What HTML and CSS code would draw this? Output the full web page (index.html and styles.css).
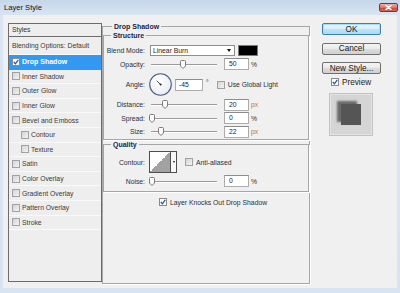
FILE: index.html
```html
<!DOCTYPE html>
<html>
<head>
<meta charset="utf-8">
<title>Layer Style</title>
<link rel="stylesheet" href="styles.css">
</head>
<body>
<div class="window">
  <div class="titlebar">
    <span class="title">Layer Style</span>
    <span class="close"><svg viewBox="0 0 7 5" width="7" height="5"><path d="M1 0.5 L6 4.5 M6 0.5 L1 4.5" stroke="#fff" stroke-width="1.5" stroke-linecap="round"/></svg></span>
  </div>
  <div class="client">
    <div class="styles">
      <div class="styles-head">Styles</div>
      <div class="row blend">Blending Options: Default</div>
      <div class="row sel"><span class="cb on"><svg viewBox="0 0 6 6"><path d="M0.8 3 L2.4 4.8 L5.3 0.8" fill="none" stroke="#2a4b9b" stroke-width="1.2"/></svg></span>Drop Shadow</div>
      <div class="row"><span class="cb"></span>Inner Shadow</div>
      <div class="row"><span class="cb"></span>Outer Glow</div>
      <div class="row"><span class="cb"></span>Inner Glow</div>
      <div class="row"><span class="cb"></span>Bevel and Emboss</div>
      <div class="row sub"><span class="cb"></span>Contour</div>
      <div class="row sub"><span class="cb"></span>Texture</div>
      <div class="row"><span class="cb"></span>Satin</div>
      <div class="row"><span class="cb"></span>Color Overlay</div>
      <div class="row"><span class="cb"></span>Gradient Overlay</div>
      <div class="row"><span class="cb"></span>Pattern Overlay</div>
      <div class="row"><span class="cb"></span>Stroke</div>
    </div>

    <fieldset class="group main">
      <legend class="main-legend">Drop Shadow</legend>
      <fieldset class="group sub-group structure">
        <legend class="sub-legend">Structure</legend>
        <div class="form">
          <span class="lbl">Blend Mode:</span>
          <div class="ctl">
            <div class="select"><span>Linear Burn</span><span class="arrow"></span></div>
            <div class="color"></div>
          </div>

          <span class="lbl">Opacity:</span>
          <div class="ctl">
            <div class="slider"><div class="track"></div><svg class="knob" style="left:30px" viewBox="0 0 6 9"><path d="M0.5 1.5 Q0.5 0.5 1.5 0.5 H4.5 Q5.5 0.5 5.5 1.5 V6 L3 8.5 L0.5 6 Z" fill="#fbfbfb" stroke="#7b7b7b"/></svg></div>
            <div class="num">50</div><span class="unit">%</span>
          </div>

          <span class="lbl">Angle:</span>
          <div class="ctl">
            <svg class="dial" viewBox="0 0 23 23"><defs><radialGradient id="dg" cx="0.4" cy="0.35" r="0.7"><stop offset="0" stop-color="#ffffff"/><stop offset="1" stop-color="#e9ecf2"/></radialGradient></defs><circle cx="11.5" cy="11.5" r="10.8" fill="url(#dg)" stroke="#4c5b7e" stroke-width="1.1"/><path d="M11.5 11.5 L7.8 7.8" stroke="#333" stroke-width="0.9"/><circle cx="11.6" cy="11.6" r="1" fill="#222"/></svg>
            <div class="num angle">-45</div><span class="deg">°</span>
            <span class="cb gap8"></span><span class="cblabel">Use Global Light</span>
          </div>

          <span class="lbl">Distance:</span>
          <div class="ctl">
            <div class="slider"><div class="track"></div><svg class="knob" style="left:12px" viewBox="0 0 6 9"><path d="M0.5 1.5 Q0.5 0.5 1.5 0.5 H4.5 Q5.5 0.5 5.5 1.5 V6 L3 8.5 L0.5 6 Z" fill="#fbfbfb" stroke="#7b7b7b"/></svg></div>
            <div class="num">20</div><span class="unit px">px</span>
          </div>

          <span class="lbl">Spread:</span>
          <div class="ctl">
            <div class="slider"><div class="track"></div><svg class="knob" style="left:-1px" viewBox="0 0 6 9"><path d="M0.5 1.5 Q0.5 0.5 1.5 0.5 H4.5 Q5.5 0.5 5.5 1.5 V6 L3 8.5 L0.5 6 Z" fill="#fbfbfb" stroke="#7b7b7b"/></svg></div>
            <div class="num">0</div><span class="unit">%</span>
          </div>

          <span class="lbl">Size:</span>
          <div class="ctl">
            <div class="slider"><div class="track"></div><svg class="knob" style="left:8px" viewBox="0 0 6 9"><path d="M0.5 1.5 Q0.5 0.5 1.5 0.5 H4.5 Q5.5 0.5 5.5 1.5 V6 L3 8.5 L0.5 6 Z" fill="#fbfbfb" stroke="#7b7b7b"/></svg></div>
            <div class="num">22</div><span class="unit px">px</span>
          </div>
        </div>
      </fieldset>

      <fieldset class="group sub-group quality">
        <legend class="sub-legend">Quality</legend>
        <div class="form">
          <span class="lbl">Contour:</span>
          <div class="ctl">
            <div class="contour"><div class="curve"></div><div class="drop"><span class="mini-arrow"></span></div></div>
            <span class="cb gap8"></span><span class="cblabel">Anti-aliased</span>
          </div>

          <span class="lbl">Noise:</span>
          <div class="ctl">
            <div class="slider"><div class="track"></div><svg class="knob" style="left:-1px" viewBox="0 0 6 9"><path d="M0.5 1.5 Q0.5 0.5 1.5 0.5 H4.5 Q5.5 0.5 5.5 1.5 V6 L3 8.5 L0.5 6 Z" fill="#fbfbfb" stroke="#7b7b7b"/></svg></div>
            <div class="num">0</div><span class="unit">%</span>
          </div>
        </div>
      </fieldset>

      <div class="knock"><span class="cb on"><svg viewBox="0 0 6 6"><path d="M0.8 3 L2.4 4.8 L5.3 0.8" fill="none" stroke="#2a4b9b" stroke-width="1.2"/></svg></span><span class="cblabel">Layer Knocks Out Drop Shadow</span></div>
    </fieldset>

    <div class="side">
      <div class="btn default">OK</div>
      <div class="btn">Cancel</div>
      <div class="btn">New Style...</div>
      <div class="preview"><span class="cb on"><svg viewBox="0 0 6 6"><path d="M0.8 3 L2.4 4.8 L5.3 0.8" fill="none" stroke="#2a4b9b" stroke-width="1.2"/></svg></span><span class="pv-label">Preview</span></div>
      <div class="swatch"><div class="sq"></div></div>
    </div>
  </div>
</div>
</body>
</html>
```

FILE: styles.css
```css
* { box-sizing: border-box; }
html, body { margin: 0; padding: 0; }
body {
  width: 400px;
  height: 293px;
  overflow: hidden;
  font-family: "Liberation Sans", Arial, sans-serif;
  font-size: 6.8px;
  color: #2e2e2e;
  background: #d6e3f1;
}
.window {
  width: 400px;
  height: 293px;
  display: flex;
  flex-direction: column;
  background: linear-gradient(#c6d7ea, #d9e5f2 16px, #d8e4f1);
}
.titlebar {
  height: 15px;
  flex: none;
  display: flex;
  align-items: center;
  justify-content: space-between;
  padding: 0 2px 0 4px;
}
.title { font-size: 7.6px; color: #111; }
.close {
  width: 19px;
  height: 9px;
  border: 1px solid #7d3329;
  border-radius: 2px;
  background: linear-gradient(#ebb2a6, #d87766 50%, #c3483a 51%, #d2695a);
  display: flex;
  align-items: center;
  justify-content: center;
}
.close svg { display: block; }

.client {
  flex: 1;
  margin: 0 3px 5px;
  background: #f0f0f0;
  display: flex;
  align-items: flex-start;
  padding: 7px 5px 0;
}

/* Styles list */
.styles {
  flex: none;
  width: 94px;
  height: 259px;
  margin-top: 1px;
  border: 1px solid #6c6c6c;
  background: #eeeeee;
}
.styles-head {
  height: 13px;
  border-bottom: 1px solid #6c6c6c;
  padding-left: 3px;
  line-height: 12px;
  color: #333;
}
.row {
  height: 14.6px;
  display: flex;
  align-items: center;
  padding-left: 3px;
  border-bottom: 1px solid #f9f9f9;
  color: #3a3a3a;
  white-space: nowrap;
}
.row.blend { height: 18px; }
.row.sub { padding-left: 12px; }
.row .cb { margin-right: 2px; }
.row.sel {
  background: #3398f2;
  color: #fff;
  font-weight: bold;
  font-size: 7px;
  border-bottom-color: #3398f2;
}

.cb {
  flex: none;
  width: 8px;
  height: 8px;
  border: 1px solid #a2a2a2;
  background: linear-gradient(135deg, #d4d4d4, #f3f3f3);
  display: inline-flex;
  align-items: center;
  justify-content: center;
}
.cb.on { background: #fdfdfd; border-color: #8a8a8a; }
.cb svg { width: 6px; height: 6px; display: block; }

/* Group boxes */
fieldset.group {
  margin: 0;
  padding: 0;
  min-width: 0;
  border: 1px solid #a6a6a6;
  box-shadow: 1px 1px 0 #ffffff;
}
fieldset.group legend {
  padding: 0 2px;
  font-weight: bold;
  font-size: 7px;
  line-height: 9px;
  color: #1c2546;
}
.main {
  flex: none;
  width: 208px;
  height: 262px;
  margin-left: 11px;
}
.main-legend { margin-left: 9px; }
.sub-group { margin: 2px 6px 0 7px; }
.sub-legend { margin-left: 7px; }
.quality { margin-top: 7px; }

.form {
  display: grid;
  grid-template-columns: 41px auto;
  column-gap: 5px;
}
.structure .form {
  padding: 3px 0 1px;
  grid-template-rows: 14px 14px 27px 13px 14px 13px;
}
.quality .form {
  padding: 1px 0 3px;
  grid-template-rows: 24px 14px;
}
.lbl {
  text-align: right;
  align-self: center;
  white-space: nowrap;
  color: #2b2f3a;
}
.ctl {
  display: flex;
  align-items: center;
  white-space: nowrap;
}

.select {
  width: 85px;
  height: 11px;
  border: 1px solid #8e8e8e;
  background: #fff;
  display: flex;
  align-items: center;
  justify-content: space-between;
  padding-left: 2px;
  color: #222;
}
.select .arrow {
  width: 0;
  height: 0;
  border-left: 2.5px solid transparent;
  border-right: 2.5px solid transparent;
  border-top: 3px solid #111;
  margin-right: 3px;
}
.color {
  width: 20px;
  height: 11px;
  margin-left: 3px;
  border: 1px solid #7c7c7c;
  background: #000;
}

.slider {
  position: relative;
  width: 68px;
  height: 10px;
  display: flex;
  align-items: center;
  flex: none;
}
.track {
  flex: 1;
  height: 1px;
  margin: 0 1px;
  background: #9a9a9a;
  box-shadow: 0 1px 0 #ffffff;
}
.knob {
  position: absolute;
  top: 0.5px;
  width: 6px;
  height: 9px;
}
.num {
  flex: none;
  width: 25px;
  height: 12px;
  margin-left: 6px;
  border: 1px solid #acacac;
  border-top-color: #8c8c8c;
  background: #fff;
  padding-left: 4px;
  line-height: 10px;
  color: #222;
}
.unit { margin-left: 2px; color: #333; }
.unit.px { color: #c7782a; }

.dial { width: 23px; height: 23px; margin-left: -1px; flex: none; }
.num.angle { width: 28px; margin-left: 3px; padding-left: 3px; }
.deg { margin: -5px 0 0 3px; }
.gap8 { margin-left: 8px; }
.cblabel { margin-left: 3px; color: #2b2f3a; }

.contour {
  width: 28px;
  height: 22px;
  margin-left: -1px;
  border: 1px solid #4e4e4e;
  display: flex;
  background: #fff;
  flex: none;
}
.contour .curve {
  flex: 1;
  background: linear-gradient(to bottom right, #ffffff 50%, #a2a2a2 50%);
}
.contour .drop {
  width: 6px;
  border-left: 1px solid #4e4e4e;
  background: #f7f7f7;
  display: flex;
  align-items: center;
  justify-content: center;
}
.mini-arrow {
  width: 0;
  height: 0;
  border-left: 1.5px solid transparent;
  border-right: 1.5px solid transparent;
  border-top: 2px solid #111;
}

.knock {
  height: 14px;
  margin: 3px 0 0 56px;
  display: flex;
  align-items: center;
  white-space: nowrap;
}

/* Right column */
.side {
  flex: none;
  width: 59px;
  margin: 1px 0 0 12px;
  display: flex;
  flex-direction: column;
}
.btn {
  height: 12px;
  border: 1px solid #707070;
  border-radius: 2px;
  background: linear-gradient(#f4f4f4, #ebebeb 45%, #dddddd 50%, #d0d0d0);
  font-size: 8.2px;
  color: #151515;
  display: flex;
  align-items: center;
  justify-content: center;
}
.btn + .btn { margin-top: 7.5px; }
.btn.default {
  border-color: #3c7fb1;
  background: linear-gradient(#eaf6fd, #d9f0fc 45%, #bee6fd 50%, #a7d9f5);
  box-shadow: inset 0 0 0 1px #a9dcf7;
}
.preview {
  height: 8px;
  margin: 4px 0 0 9px;
  display: flex;
  align-items: center;
}
.pv-label { margin-left: 3px; font-size: 8.2px; color: #222; }
.swatch {
  width: 44px;
  height: 43px;
  margin: 7px 0 0 7px;
  border: 1px solid #c2c2c2;
  background: #d5d5d5;
  box-shadow: inset 0 0 0 1px #e4e4e4;
  padding: 10px 0 0 11px;
}
.sq {
  width: 20px;
  height: 21px;
  background: #555555;
  box-shadow: -4px -3px 2px #6a6a6a;
}
```
